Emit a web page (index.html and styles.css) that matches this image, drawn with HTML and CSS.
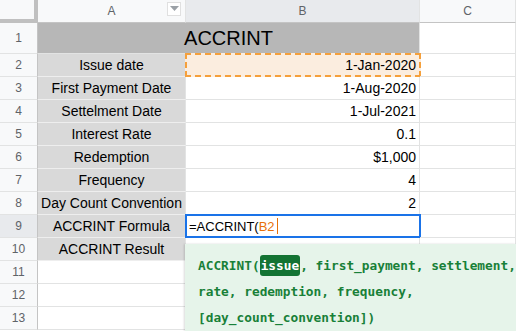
FILE: index.html
```html
<!DOCTYPE html>
<html lang="en">
<head>
  <meta charset="UTF-8" />
  <title>ACCRINT</title>
  <link rel="stylesheet" href="styles.css">
</head>
<body>
  <div class="sheet">
    <div class="corner"></div>
    <div class="col-head">A<span class="filter"><svg width="9" height="6" viewBox="0 0 9 6"><path d="M0 0h9L4.5 5z" fill="#9aa0a6"/></svg></span></div>
    <div class="col-head active">B</div>
    <div class="col-head">C</div>

    <div class="row-head tall">1</div>
    <div class="title">ACCRINT</div>
    <div class="cell tall"></div>

    <div class="row-head">2</div>
    <div class="label">Issue date</div>
    <div class="value copied">1-Jan-2020</div>
    <div class="cell"></div>

    <div class="row-head">3</div>
    <div class="label">First Payment Date</div>
    <div class="value">1-Aug-2020</div>
    <div class="cell"></div>

    <div class="row-head">4</div>
    <div class="label">Settelment Date</div>
    <div class="value">1-Jul-2021</div>
    <div class="cell"></div>

    <div class="row-head">5</div>
    <div class="label">Interest Rate</div>
    <div class="value">0.1</div>
    <div class="cell"></div>

    <div class="row-head">6</div>
    <div class="label">Redemption</div>
    <div class="value">$1,000</div>
    <div class="cell"></div>

    <div class="row-head">7</div>
    <div class="label">Frequency</div>
    <div class="value">4</div>
    <div class="cell"></div>

    <div class="row-head">8</div>
    <div class="label">Day Count Convention</div>
    <div class="value">2</div>
    <div class="cell"></div>

    <div class="row-head active">9</div>
    <div class="label">ACCRINT Formula</div>
    <div class="value editing">=ACCRINT(<span class="ref">B2</span><span class="caret"></span></div>
    <div class="cell"></div>

    <div class="row-head">10</div>
    <div class="label">ACCRINT Result</div>
    <div class="value"></div>
    <div class="cell"></div>

    <div class="row-head">11</div>
    <div class="cell"></div>
    <div class="value"></div>
    <div class="cell"></div>

    <div class="row-head">12</div>
    <div class="cell"></div>
    <div class="value"></div>
    <div class="cell"></div>

    <div class="row-head">13</div>
    <div class="cell"></div>
    <div class="value"></div>
    <div class="cell"></div>
  </div>

  <div class="hint">
    <div>ACCRINT(<span class="arg">issue</span>, first_payment, settlement,</div>
    <div>rate, redemption, frequency,</div>
    <div>[day_count_convention])</div>
  </div>
</body>
</html>
```

FILE: styles.css
```css
body {
  margin: 0;
  width: 516px;
  height: 331px;
  overflow: hidden;
  background: #fff;
  font-family: "Liberation Sans", Arial, sans-serif;
  position: relative;
}

.sheet {
  display: grid;
  grid-template-columns: 38px 148px 234px 1fr;
  grid-template-rows: 23px 31px repeat(12, 23px);
  width: 516px;
  height: 331px;
  overflow: hidden;
}

.sheet > div {
  box-sizing: border-box;
  border-right: 1px solid #e2e3e3;
  border-bottom: 1px solid #e2e3e3;
  display: flex;
  align-items: center;
  font-size: 14px;
  color: #000;
  white-space: nowrap;
}

.corner {
  background: #f8f9fa;
  border-right: 4px solid #c0c0c0 !important;
  border-bottom: 4px solid #c0c0c0 !important;
}

.col-head {
  background: #f8f9fa;
  justify-content: center;
  font-size: 12px !important;
  color: #5f6368 !important;
  border-bottom: 1px solid #c4c4c4 !important;
  position: relative;
}

.col-head.active {
  background: #e8eaed;
}

.filter {
  position: absolute;
  right: 4px;
  top: 2px;
  width: 14px;
  height: 14px;
  box-sizing: border-box;
  border: 1px solid #e0e0e0;
  background: #fff;
  display: flex;
  align-items: center;
  justify-content: center;
}

.row-head {
  background: #f8f9fa;
  justify-content: center;
  font-size: 12px !important;
  color: #5f6368 !important;
  border-right: 1px solid #c4c4c4 !important;
}

.row-head.active {
  background: #e8eaed;
}

.title {
  grid-column: span 2;
  background: #b7b7b7;
  justify-content: center;
  font-size: 20px !important;
}

.label {
  background: #d9d9d9;
  justify-content: center;
  border-bottom-color: #eeeeee !important;
}

.value {
  justify-content: flex-end;
  padding: 0 3px;
}

.copied {
  background: #fbeddf;
  border: 2px dashed #f5a03c !important;
  margin: -1px -1px 0 -1px;
}

.editing {
  justify-content: flex-start;
  border: 2px solid #1a73e8 !important;
  margin: -1px -1px 0 -1px;
  font-size: 13px !important;
  padding: 0 2px;
}

.ref {
  color: #e8710a;
}

.caret {
  display: inline-block;
  width: 1px;
  height: 16px;
  margin-left: 2px;
  background: #e8710a;
}

.hint {
  position: absolute;
  left: 185px;
  top: 244px;
  width: 331px;
  height: 87px;
  overflow: hidden;
  box-sizing: border-box;
  padding: 9px 0 0 13px;
  background: #e6f4ea;
  box-shadow: -1px 0 2px rgba(0, 0, 0, 0.15);
  font-family: "DejaVu Sans Mono", monospace;
  font-weight: bold;
  font-size: 12.8px;
  line-height: 26px;
  color: #188038;
  white-space: nowrap;
}

.arg {
  background: #137333;
  color: #fff;
  border-radius: 3px;
  padding: 3px 1px;
}
```
